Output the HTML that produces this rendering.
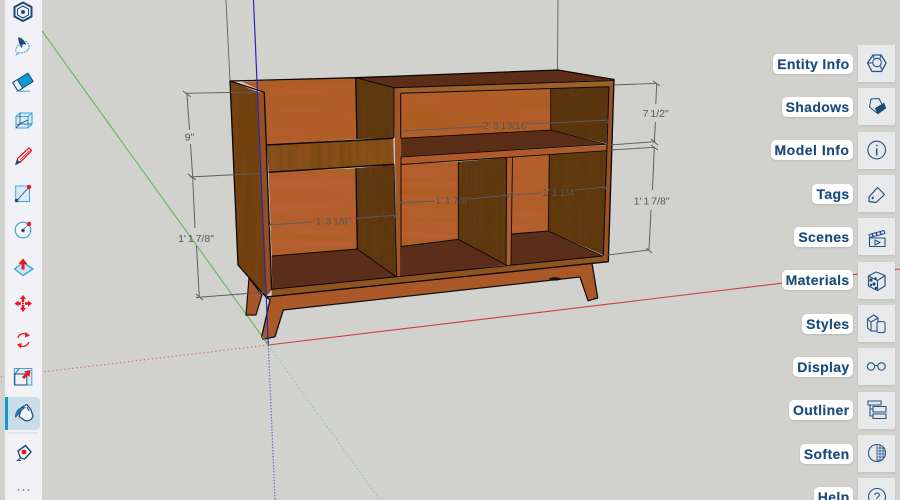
<!DOCTYPE html>
<html><head><meta charset="utf-8"><style>
html,body{margin:0;padding:0;width:900px;height:500px;overflow:hidden;background:#d1d2cd;font-family:"Liberation Sans",sans-serif}
#w{position:relative;width:900px;height:500px;overflow:hidden;background:#d1d2cd}
svg{position:absolute;left:0;top:0}
.l{position:absolute;right:47px;height:20px;line-height:20px;background:#fff;border-radius:5px;padding:0 3.5px 0 4px;font-weight:bold;font-size:14px;letter-spacing:.35px;color:#1b4a7c;box-shadow:0 1px 2px rgba(0,0,0,.12);white-space:nowrap;-webkit-text-stroke:.15px #1b4a7c}
.b{position:absolute;left:858px;width:37px;height:37px;background:#e8e9ea;box-shadow:0 1px 2px rgba(0,0,0,.1)}
.d{font-size:10.5px;word-spacing:-1px;fill:#55585a;text-anchor:middle;font-family:"Liberation Sans",sans-serif}
</style></head><body><div id="w">
<svg width="900" height="500" viewBox="0 0 900 500">
<defs>
<filter id="gh" x="0" y="0" width="100%" height="100%"><feTurbulence type="fractalNoise" baseFrequency="0.008 0.16" numOctaves="2" seed="4"/><feColorMatrix values="0 0 0 0 .35  0 0 0 0 .12  0 0 0 0 0  .9 0 0 0 -.3"/><feComposite in2="SourceAlpha" operator="in" result="n"/><feMerge><feMergeNode in="SourceGraphic"/><feMergeNode in="n"/></feMerge></filter>
<filter id="gv" x="0" y="0" width="100%" height="100%"><feTurbulence type="fractalNoise" baseFrequency="0.18 0.008" numOctaves="2" seed="9"/><feColorMatrix values="0 0 0 0 .12  0 0 0 0 .05  0 0 0 0 0  1 0 0 0 -.38"/><feComposite in2="SourceAlpha" operator="in" result="n"/><feMerge><feMergeNode in="SourceGraphic"/><feMergeNode in="n"/></feMerge></filter>
</defs>

<g stroke="#5e6062" stroke-width=".9" fill="none">
<path d="M226 0L230 81M558 0L557.5 70"/>
</g>
<path d="M42 31L268.3 345" stroke="#4fb84f" stroke-width="1" fill="none"/>
<path d="M268.3 345L380 500" stroke="#8fce8f" stroke-width="1.2" stroke-dasharray="1.5 2.5" fill="none"/>
<path d="M268.3 345L275 500" stroke="#6f74c4" stroke-width="1.3" stroke-dasharray="1.5 1.5" fill="none"/>
<path d="M268.3 345L0 377" stroke="#c87a7a" stroke-width="1.2" stroke-dasharray="1.5 2.5" fill="none"/>
<path d="M268.3 345L900 269" stroke="#cf3d45" stroke-width="1.1" fill="none"/>

<polygon points="249,278 262,295 256,315 246,315" fill="#a9552a" stroke="#111" stroke-width="1.2" stroke-linejoin="round"/>
<polygon points="230,81 258,92 266,297 238,265" fill="#744216" filter="url(#gv)"/>
<polygon points="355.7,77.7 558,70 614,80 394,88" fill="#5c2e17"/>
<polygon points="241.7,81.7 355.7,77.7 357,139 266.7,145 264,92" fill="#b45d2f" filter="url(#gh)"/>
<polygon points="355.7,77.7 394,87.7 394,138 356.7,139" fill="#5e3816" filter="url(#gv)"/>
<polygon points="266.7,145 393.3,138.3 394,164.3 268.7,172.3" fill="#88501c" filter="url(#gv)"/>
<polygon points="268.7,172.3 356,168.3 357.3,249 271.7,256" fill="#b65f30" filter="url(#gh)"/>
<polygon points="356,168.3 394,164.3 396.7,277.3 357.3,249" fill="#5e3816" filter="url(#gv)"/>
<polygon points="271.7,256 357.3,249 396.7,277.3 272.3,289.3" fill="#5a2e18"/>
<polygon points="400.7,93.3 550.7,88.3 550.7,130 400.7,138.3" fill="#b45d2f" filter="url(#gh)"/>
<polygon points="550.7,88.3 609,86.7 606.5,143.5 550.7,130" fill="#5a3515" filter="url(#gv)"/>
<polygon points="400.7,138.3 550.7,130 606,144.3 400.7,157" fill="#5a2d17"/>
<polygon points="400.7,157 606.5,145 606.5,150.7 400.7,164.5" fill="#b05a2b"/>
<polygon points="401,164.5 458.3,161.7 458.3,239.3 401.5,246.5" fill="#b65f30" filter="url(#gh)"/>
<polygon points="458.3,161.7 506.7,157.7 506,265 458.3,239.3" fill="#5e3816" filter="url(#gv)"/>
<polygon points="401.5,246.5 458.3,239.3 506,265 402,277" fill="#5a2e18"/>
<polygon points="506.7,157.7 512.5,156.7 511,265 506,265.7" fill="#b05c2b"/>
<polygon points="512.7,156.7 549.3,154.7 548.3,231 511.7,234" fill="#b65f30" filter="url(#gh)"/>
<polygon points="549.3,154.7 606.7,151 603.3,255 548.3,231" fill="#5e3816" filter="url(#gv)"/>
<polygon points="511.7,234 548.3,231 602.7,256 511,265" fill="#5a2e18"/>
<polygon points="394,87.7 614,80.5 609,86.7 400.7,93.3" fill="#9e6029"/>
<polygon points="394,87.7 400.7,92 402,277 396.7,277.3" fill="#a25528"/>
<polygon points="609,86.7 614,80 608.3,261.7 603.3,256" fill="#9a5122"/>
<polygon points="266,297 592,263 597.7,298 588,300.7 580,277 283.3,310 275,336.7 263.3,339.3 261.7,336.7 270,300" fill="#ab5829" stroke="#111" stroke-width="1.3" stroke-linejoin="round"/>
<polygon points="271.7,289.3 603,256 608.3,261.7 271.7,296.7" fill="#90551f"/>
<polygon points="257,92 264.3,92.3 271.7,290 266,297" fill="#95501f"/>

<g stroke="#0b0705" stroke-width="1.3" fill="none" stroke-linejoin="round">
<path d="M230 81L355.7 77.7L558 70L614 79.5L608.3 261.7L266 297L238 265L230 81Z"/>
<path d="M230 81L264.3 92.3L271.7 290"/>
<path d="M355.7 77.7L394 87.7L614 80.5" stroke-width="1"/>
<path d="M355.7 78L357 139M356 168.3L357.3 249"/>
<path d="M266.7 145L393.3 138.3M268.7 172.3L394 164.3" stroke-width="1.4"/>
<path d="M400.7 93.3L609 86.7L603.3 256M400.7 93.3V138.3" stroke-width="1"/>
<path d="M394 87.7V138M394 164.3L396.7 277.3M401 157V277" stroke-width=".9"/>
<path d="M400.7 138.3L550.7 130L606 144.3L400.7 157M550.7 88.3V130" stroke-width=".8"/>
<path d="M401 164.5L606.7 150.7M458.3 161.7V239.3L506 265M401.5 246.5L458.3 239.3" stroke-width=".9"/>
<path d="M506.7 157.7L506 265.7M512.5 156.7L511 265M511.7 234L548.3 231L602.7 256M549.3 154.7L548.3 231" stroke-width=".9"/>
<path d="M271.7 256L357.3 249L396.7 277.3" stroke-width=".9"/>
<path d="M272 289.3L603 256" stroke-width="1"/>
</g>
<ellipse cx="555" cy="279" rx="6" ry="1.6" fill="#111"/>

<g stroke="#5a5d5f" stroke-width=".95" fill="none">
<path d="M185 93.3L257 92M187 95L189.5 130M190.5 144L192.7 176.7M190 177L267 173M192.7 177L195 228M196.5 246L199.3 297M196 297.5L266 292"/>
<path d="M183 91L191 97M188 174L196 180M196 294L203 300"/>
<path d="M270 225L312 222M355 218.5L396.7 215M402 203L435 201M471 199L510 195M512 195L542 193M577 190L608 186.7M402 131L483 126.5M530 124L610 120"/>
<path d="M268 228L272 222M394 218L399 212M398 206L403 200M507 198L512 192M605 189L610 184M607 123L612 117"/>
<path d="M614 85L656.7 83.3M656.7 83.3L655.8 104M655.4 122L654.3 143.3M610 145L654.3 141.7M610 150L655 147.3M654.3 147L652.5 190M651 210L649 250M608 255L649 250"/>
<path d="M653 81L660 86M651 139L658 145M651 145L658 150M646 248L652 253"/>
</g>
<g>
<text class="d" x="189.5" y="140.5">9"</text>
<text class="d" x="196" y="242">1' 1 7/8"</text>
<text class="d" x="333.5" y="224.5">1' 3 1/8"</text>
<text class="d" x="453" y="204">1' 1 7/8"</text>
<text class="d" x="560" y="196">1' 1 1/4"</text>
<text class="d" x="506.7" y="129">2' 3 13/16"</text>
<text class="d" x="655.7" y="117">7 1/2"</text>
<text class="d" x="651.7" y="204.5">1' 1 7/8"</text>
</g>
<path d="M253.5 0L268.3 345" stroke="#2a24b8" stroke-width="1.2" fill="none"/>
<path d="M262 336L268.3 345" stroke="#4fb84f" stroke-width="1" fill="none"/>

<rect x="5" y="0" width="37" height="500" fill="#f1f1f6"/>
<rect x="5" y="397" width="35" height="33" rx="5" fill="#c9dde9"/>
<rect x="5" y="397" width="3" height="33" fill="#0f9ad5"/>
<rect x="8" y="432.500" width="30" height="1" fill="#d4d5da"/>

<g fill="none" stroke="#1b4a7c">
<path d="M23 2.500L31.500 7V16.500L23 21L14.500 16.500V7Z" stroke-width="2"/>
<path d="M23 6L28.500 9V15L23 18L17.500 15V9Z" stroke-width="1"/>
<circle cx="23" cy="12" r="2" fill="#1b4a7c" stroke="none"/>
</g>
<path d="M25 41C30 43 30.500 49 26 51.500C23 53.500 19 53 17.500 53L16 56M19 45C15 48 15 51 17.500 53" fill="none" stroke="#3aa6dd" stroke-width="1.100" stroke-dasharray="2 .8"/>
<path d="M18 37.500C21 37 24 40 26.500 44.500L23 44L21.500 48L19 43Z" fill="#1b4a7c"/>
<g transform="rotate(-32 23 82)"><rect x="14" y="77" width="18" height="10" rx="1" fill="#0f9ad5" stroke="#1b4a7c" stroke-width="1"/><rect x="14" y="77" width="5.500" height="10" fill="#f1f1f6" stroke="#1b4a7c" stroke-width="1"/></g>
<path d="M16 91.200H30" stroke="#3aa6dd" stroke-width="1"/>
<g fill="none" stroke-width="1.100">
<path d="M16 116.500L20 113H32V124L28 128H16Z M16 116.500H28V128 M28 116.500L32 113" stroke="#3aa6dd" fill="#dbeaf5"/>
<path d="M20 113V124H32M20 124L16 128M17 125L28 120" stroke="#1b4a7c" stroke-width=".8"/>
</g>
<path d="M16 164L18 158L29 148L31.500 150.500L21 161.500Z" fill="#fff" stroke="#f0141e" stroke-width="1.300" stroke-linejoin="round"/>
<path d="M20 160L29.500 150.500" stroke="#f0141e" stroke-width=".8"/>
<path d="M15 165.500L17 159.500L20.500 162.500Z" fill="#1b4a7c"/>
<rect x="15.700" y="186" width="13.800" height="15.500" fill="#dbeaf5" stroke="#3aa6dd" stroke-width="1"/>
<path d="M16.500 201L29 187" stroke="#4a6f8f" stroke-width="1"/>
<circle cx="29" cy="187" r="2.200" fill="#f0141e"/><circle cx="16.500" cy="200.500" r="1.700" fill="#1b4a7c"/>
<circle cx="23" cy="230" r="7.800" fill="#f6f7fb" stroke="#3aa6dd" stroke-width="1.200"/>
<path d="M23 230L29 224" stroke="#4a6f8f" stroke-width=".8"/>
<circle cx="29" cy="224" r="2.200" fill="#f0141e"/><circle cx="23" cy="230.500" r="1.700" fill="#1b4a7c"/>
<path d="M14.500 269L23 262.500L33 269L23 275.500Z" fill="#cfe4f3" stroke="#3aa6dd" stroke-width="1.400" stroke-linejoin="round"/>
<path d="M23 258.500L18.500 264H21.500V269.500H24.500V264H27.500Z" fill="#f0141e"/>
<g fill="#f0141e">
<path d="M23 295L26 299H24.300V302H21.700V299H20Z"/>
<path d="M23 312L26 308H24.300V305H21.700V308H20Z"/>
<path d="M14.500 303.500L18.500 300.500V302.200H21V304.800H18.500V306.500Z"/>
<path d="M32 303.500L28 300.500V302.200H25V304.800H28V306.500Z"/>
<circle cx="23" cy="303.500" r="1"/>
</g>
<path d="M18 338C19 334 23 332.500 27 334.500M29 342C27.500 346 23 347.500 19.500 345.500" fill="none" stroke="#f0141e" stroke-width="1.300"/>
<path d="M25.500 332L30 335.500L25 337.500Z M21.500 343L17 344.500L21 348.500Z" fill="#f0141e"/>
<rect x="14.300" y="368.500" width="17.500" height="16.500" fill="#dbeaf5" stroke="#3aa6dd" stroke-width="1"/>
<rect x="14.800" y="374" width="12" height="11" fill="#f1f1f6" stroke="#1b4a7c" stroke-width="1"/>
<path d="M14.800 374L19 369" stroke="#1b4a7c" stroke-width=".8"/>
<path d="M30.500 370L29.500 377L27.800 375.200L24 379L22 377L25.800 373.200L24 371.500Z" fill="#f0141e"/>
<path d="M22 407L27 404.500L31 410L33 416C32 420 28 421.500 25 420.500L19 416.500Z" fill="#f2f5f9" stroke="#1b4a7c" stroke-width="1.200" stroke-linejoin="round"/>
<path d="M15.500 417C15.500 411 20 406.500 25 407.500L19.500 412C18.500 414 17 416 15.500 417Z" fill="#0f8fd0" stroke="#1b4a7c" stroke-width=".8"/>
<path d="M27 407L29 411" stroke="#1b4a7c" stroke-width="1"/>
<path d="M18 451L25.500 445.500L31 452L24.500 459L20.500 458Z" fill="#f6f7fb" stroke="#1b4a7c" stroke-width="1.400" stroke-linejoin="round"/>
<circle cx="24" cy="452" r="2.500" fill="#f0141e"/>
<path d="M20.500 458L17.500 460.500H21" fill="none" stroke="#1b4a7c" stroke-width="1"/>
<g fill="#6c7078"><circle cx="18.500" cy="490" r=".9"/><circle cx="23.500" cy="490" r=".9"/><circle cx="28.500" cy="490" r=".9"/></g>
</svg>

<div class="l" style="top:53.500px">Entity Info</div><div class="b" style="top:45px"></div>
<div class="l" style="top:96.800px">Shadows</div><div class="b" style="top:88.300px"></div>
<div class="l" style="top:140.200px;letter-spacing:.5px">Model Info</div><div class="b" style="top:131.700px"></div>
<div class="l" style="top:183.500px">Tags</div><div class="b" style="top:175px"></div>
<div class="l" style="top:226.800px">Scenes</div><div class="b" style="top:218.300px"></div>
<div class="l" style="top:270.200px">Materials</div><div class="b" style="top:261.700px"></div>
<div class="l" style="top:313.500px">Styles</div><div class="b" style="top:305px"></div>
<div class="l" style="top:356.800px">Display</div><div class="b" style="top:348.300px"></div>
<div class="l" style="top:400.200px">Outliner</div><div class="b" style="top:391.700px"></div>
<div class="l" style="top:443.500px">Soften</div><div class="b" style="top:435px"></div>
<div class="l" style="top:486.800px">Help</div><div class="b" style="top:478.300px"></div>

<svg width="900" height="500" viewBox="0 0 900 500">
<g fill="none" stroke="#24538a" stroke-width="1.100" stroke-linejoin="round">
<path d="M873 55H881L886 63L881.500 71.500H872L867.500 63Z" stroke-width="1.300"/><circle cx="877" cy="62.500" r="4.300"/><path d="M880 66L882.500 70M873 55L874 58.500M881 55L880 58.500M867.500 63H872.500"/>
<path d="M871 99L879 98.500L884 108L877 113L869.500 107Z"/><path d="M875.500 108.500L884 103.500L885.500 108L878 113.500Z" fill="#1b4a7c" stroke="#1b4a7c"/>
<circle cx="876.700" cy="150" r="8.800"/><path d="M876.700 148.500V155.500" stroke-width="1.500"/><circle cx="876.700" cy="145.500" r=".9" fill="#24538a" stroke="none"/>
<path d="M869 197L877.500 187.500L884.500 194.500L876 202.500L869 201.500Z" stroke-width="1.200"/><circle cx="872.800" cy="198" r="1.200" fill="#24538a" stroke="none"/>
<path d="M869.500 238V246.500H885V238Z"/><path d="M869 234.500L884 230.500L885 233.500L870 237.500Z"/><path d="M872 233.500L873 236.500M876 232.500L877 235.500M880 231.500L881 234.500" stroke-width="1.500"/><path d="M875 240L880 242.500L875 245Z"/>
<path d="M876 272L885 275.500V286L877.500 290.500L868.500 286V276Z" stroke-width="1.200"/><path d="M868.500 276L877.500 280.500V290.500M877.500 280.500L885 275.500"/><g fill="#1b4a7c" stroke="none"><circle cx="871" cy="280" r="1.600"/><circle cx="874" cy="284" r="1.600"/><circle cx="871" cy="285" r="1.200"/><circle cx="875.500" cy="278.500" r="1.300"/><circle cx="876" cy="288" r="1.200"/></g>
<path d="M867.500 319L874 315L878 318V331H871L867.500 328Z M867.500 319L871 322V331M871 322L878 318"/><path d="M877 323V331.500C877 333 885 333 885 331.500V323C885 321 877 321 877 323Z" fill="#e8e9ea"/>
<circle cx="871" cy="366.500" r="3.700"/><circle cx="881.500" cy="366.500" r="3.700"/><path d="M874.700 365.500H877.800M867.300 366L868 364M885.200 366L884.500 364"/>
<path d="M868 401H881V405H868ZM873 406.500H886V412H873ZM873 414H886V418.500H873Z M870 405V416H873M870 409H873"/>
<circle cx="877" cy="453" r="8.500"/><path d="M877 444.500V461.500M880 445V461M883 447V459M877 448H885M877 451H885.500M877 454H885.500M877 457H885M877 460H882" stroke-width=".8"/>
<circle cx="877" cy="497" r="8.500"/>
</g>
<text x="877" y="501" text-anchor="middle" font-family="Liberation Sans" font-size="12" fill="#24538a">?</text>
</svg>
</div></body></html>
